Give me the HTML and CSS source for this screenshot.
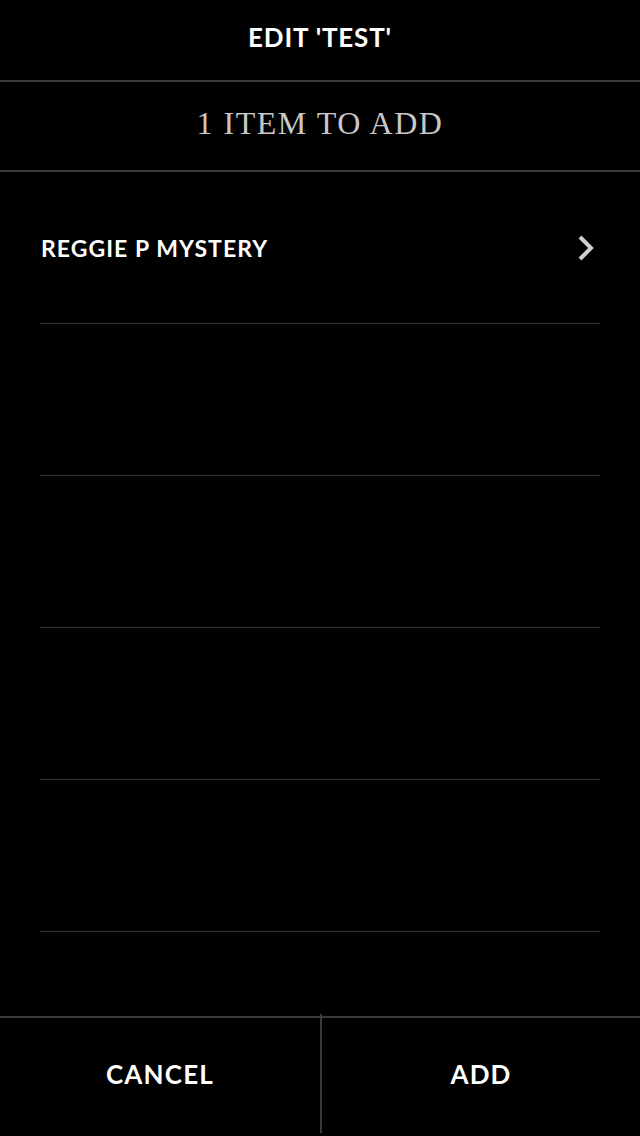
FILE: index.html
```html
<!DOCTYPE html>
<html>
<head>
<meta charset="utf-8">
<link rel="stylesheet" href="styles.css">
</head>
<body>
<div class="screen">
  <header class="title-bar">
    <h1 class="title">EDIT 'TEST'</h1>
  </header>
  <div class="subheader">
    <h2 class="subtitle">1 ITEM TO ADD</h2>
  </div>
  <ul class="list">
    <li class="row">
      <span class="row-label">REGGIE P MYSTERY</span>
      <svg class="chevron" width="20" height="28" viewBox="0 0 20 28"><path d="M4 3 L15 14 L4 25" fill="none" stroke="#cfcfcf" stroke-width="4"/></svg>
    </li>
    <li class="row"></li>
    <li class="row"></li>
    <li class="row"></li>
    <li class="row"></li>
  </ul>
  <footer class="footer">
    <button class="btn btn-cancel">CANCEL</button>
    <button class="btn btn-add">ADD</button>
  </footer>
</div>
</body>
</html>
```

FILE: styles.css
```css
html, body {
  margin: 0;
  padding: 0;
  background: #000;
}
.screen {
  width: 640px;
  height: 1136px;
  background: #000;
  display: flex;
  flex-direction: column;
  font-family: Lato, "Open Sans", sans-serif;
  color: #fff;
}
.title-bar {
  height: 80px;
  border-bottom: 2px solid #3a3a3a;
  display: flex;
  align-items: center;
  justify-content: center;
}
.title {
  margin: 0;
  font-size: 26px;
  font-weight: 700;
  letter-spacing: 0.8px;
  line-height: 1;
  padding-bottom: 6px;
}
.subheader {
  height: 88px;
  border-bottom: 2px solid #3a3a3a;
  display: flex;
  align-items: center;
  justify-content: center;
}
.subtitle {
  margin: 0;
  font-family: "Liberation Serif", serif;
  font-weight: 400;
  font-size: 32px;
  letter-spacing: 1.5px;
  color: #c8c8c8;
  line-height: 1;
  padding-bottom: 7px;
}
.list {
  list-style: none;
  margin: 0 40px;
  padding: 0;
  flex: 1;
}
.row {
  height: 151px;
  border-bottom: 1px solid #333;
  display: flex;
  align-items: center;
  justify-content: space-between;
}
.row-label {
  font-size: 23px;
  font-weight: 700;
  letter-spacing: 1.05px;
  padding-left: 1px;
}
.chevron {
  margin-right: 4px;
}
.footer {
  height: 118px;
  border-top: 2px solid #3a3a3a;
  display: grid;
  grid-template-columns: 1fr 1fr;
}
.btn {
  background: transparent;
  border: 0;
  color: #fff;
  font-family: Lato, "Open Sans", sans-serif;
  font-size: 26px;
  font-weight: 700;
  letter-spacing: 1.2px;
  padding: 0;
}
.btn-cancel {
  padding-bottom: 6px;
}
.btn-add {
  border-left: 2px solid #3a3a3a;
  margin-top: -4px;
  margin-bottom: 3px;
  padding-top: 0;
}
```
